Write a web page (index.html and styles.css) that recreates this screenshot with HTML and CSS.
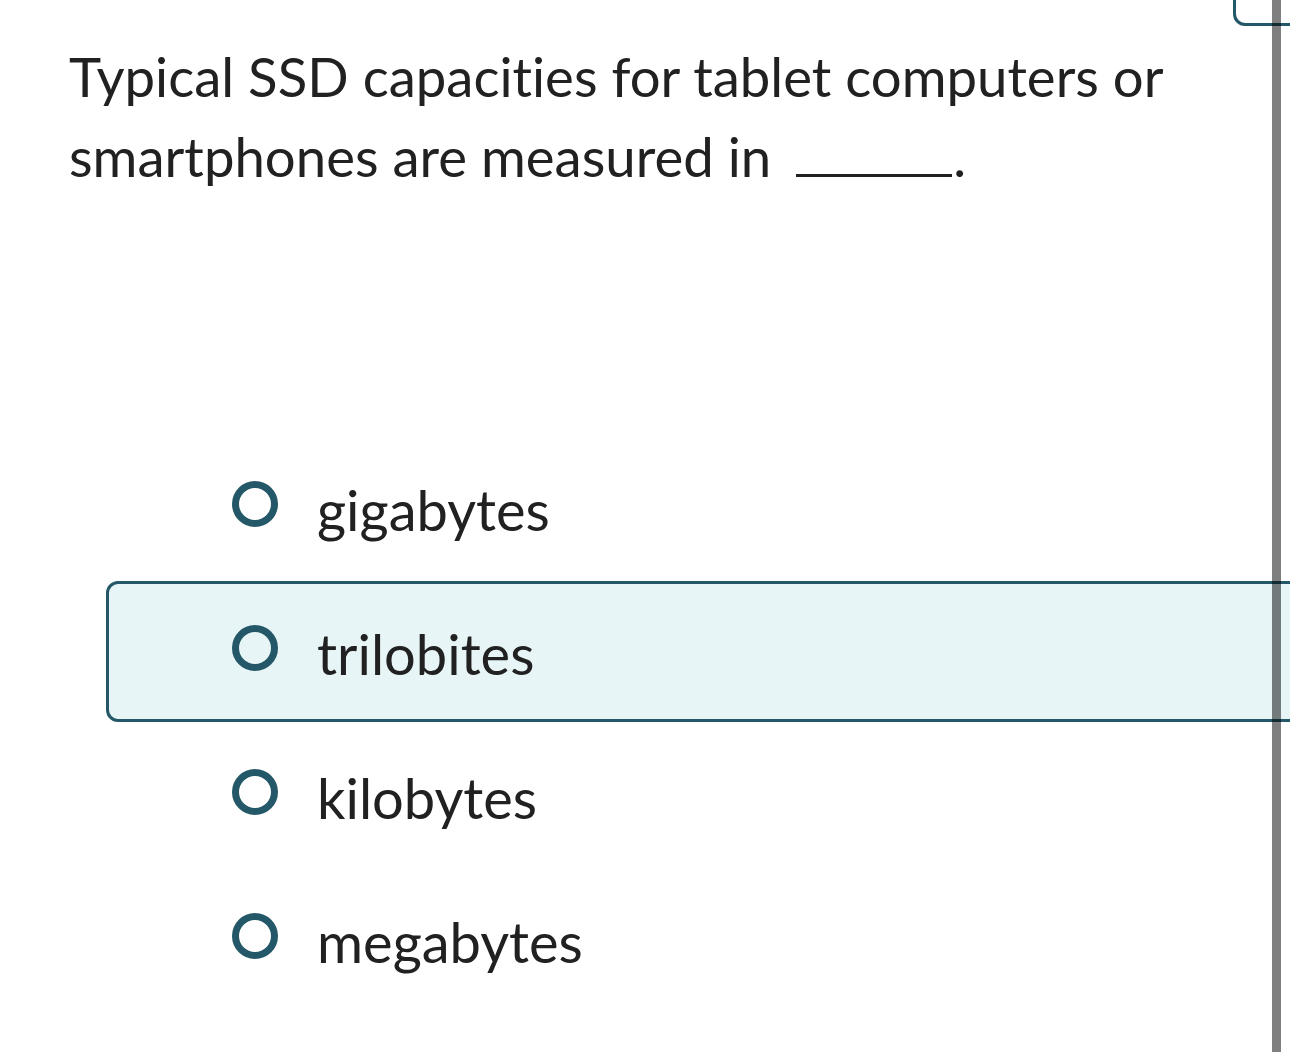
FILE: index.html
```html
<!DOCTYPE html>
<html lang="en">
<head>
<meta charset="utf-8">
<title>Question</title>
<link rel="stylesheet" href="styles.css">
</head>
<body>
<div class="page">
  <header class="topbar">
    <div class="top-button"></div>
  </header>
  <p class="question"><span>Typical SSD capacities for tablet computers or</span> <span class="nowrap">smartphones are measured in<span class="blank"></span>.</span></p>
  <ul class="options">
    <li class="option"><span class="radio"></span><span class="label">gigabytes</span></li>
    <li class="option option-active"><span class="radio"></span><span class="label">trilobites</span></li>
    <li class="option"><span class="radio"></span><span class="label">kilobytes</span></li>
    <li class="option"><span class="radio"></span><span class="label">megabytes</span></li>
  </ul>
</div>
<div class="scrollbar"></div>
</body>
</html>
```
FILE: styles.css
```css
html, body {
  margin: 0;
  padding: 0;
  background: #ffffff;
  overflow: hidden;
}
body {
  font-family: Lato, "Open Sans", sans-serif;
  font-variant-ligatures: none;
  color: #212121;
}
.page {
  width: 1290px;
  height: 1052px;
  overflow: hidden;
}
.topbar {
  height: 26px;
  display: flex;
  justify-content: flex-end;
  align-items: flex-end;
  overflow: hidden;
}
.top-button {
  width: 90px;
  height: 60px;
  flex: none;
  box-sizing: border-box;
  border: 3px solid #245868;
  border-radius: 12px;
  margin-right: -33px;
}
.question {
  margin: 10px 0 0 69px;
  width: 1190px;
  font-size: 54.5px;
  line-height: 80px;
}
.nowrap {
  white-space: nowrap;
}
.blank {
  display: inline-block;
  width: 156px;
  height: 6px;
  border-bottom: 3px solid #212121;
  margin-left: 25px;
  margin-right: 1px;
}
.options {
  list-style: none;
  margin: 241px 0 0 106px;
  padding: 0;
  width: 1220px;
  display: flex;
  flex-direction: column;
  gap: 3px;
}
.option {
  height: 141px;
  box-sizing: border-box;
  border: 3px solid transparent;
  border-radius: 12px;
  display: flex;
  align-items: center;
  padding: 0 0 7px 123px;
}
.option-active {
  border-color: #245868;
  background: #e7f5f7;
}
.radio {
  width: 46px;
  height: 46px;
  box-sizing: border-box;
  border: 7px solid #245868;
  border-radius: 50%;
  flex: none;
}
.label {
  margin-left: 39px;
  padding-top: 12px;
  font-size: 56px;
  line-height: 60px;
}
.scrollbar {
  position: fixed;
  top: 0;
  bottom: 0;
  right: 9px;
  width: 9px;
  background: rgba(0, 0, 0, 0.5);
}
```
